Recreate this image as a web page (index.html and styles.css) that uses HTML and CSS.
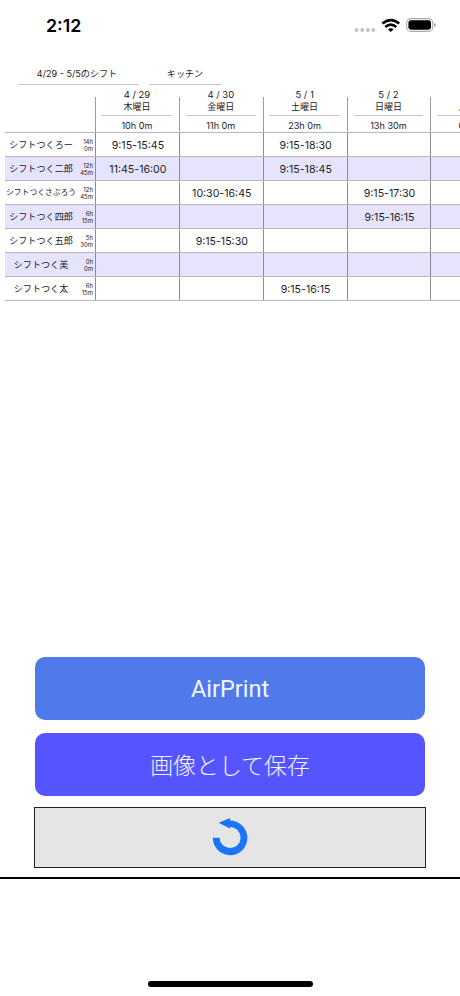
FILE: index.html
```html
<!DOCTYPE html>
<html lang="ja">
<head>
<meta charset="utf-8">
<title>シフト</title>
<link rel="stylesheet" href="styles.css">
</head>
<body>
<header class="status">
  <span class="clock">2:12</span>
  <svg class="indicators" width="84" height="20" viewBox="0 0 84 20">
    <g fill="#c4c4c4"><circle cx="4.5" cy="15" r="2"/><circle cx="10.2" cy="15" r="2"/><circle cx="15.9" cy="15" r="2"/><circle cx="21.3" cy="15" r="2"/></g>
    <g fill="none" stroke="#000" stroke-width="2.6"><path d="M30.4 8.6Q38.8 1.5 47.2 8.6"/><path d="M33.3 12Q38.8 7.2 44.3 12"/></g>
    <path d="M36 14.2Q38.8 12.1 41.6 14.2L38.8 17Z"/>
    <rect x="54.7" y="3.6" width="26" height="12.8" rx="4" fill="#fff" stroke="#aaa" stroke-width="1.1"/>
    <rect x="56.4" y="5.3" width="22.6" height="9.4" rx="2.4"/>
    <path d="M82 8.1Q83.6 8.5 83.6 10T82 11.9Z" fill="#999"/>
  </svg>
</header>
<div class="labels">
  <div class="label period">4/29 - 5/5のシフト</div>
  <div class="label place">キッチン</div>
</div>
<main class="sheet">
  <div class="row head">
    <div class="corner"></div>
    <div class="day"><div class="date">4 / 29</div><div class="week">木曜日</div><div class="total">10h 0m</div></div>
    <div class="day"><div class="date">4 / 30</div><div class="week">金曜日</div><div class="total">11h 0m</div></div>
    <div class="day"><div class="date">5 / 1</div><div class="week">土曜日</div><div class="total">23h 0m</div></div>
    <div class="day"><div class="date">5 / 2</div><div class="week">日曜日</div><div class="total">13h 30m</div></div>
    <div class="day"><div class="date"></div><div class="week">月曜日</div><div class="total">0h 0m</div></div>
  </div>
  <div class="row"><div class="person"><span class="name">シフトつくろー</span><span class="hours">14h<br>0m</span></div><div class="cell">9:15-15:45</div><div class="cell"></div><div class="cell">9:15-18:30</div><div class="cell"></div><div class="cell"></div></div>
  <div class="row"><div class="person"><span class="name">シフトつく二郎</span><span class="hours">12h<br>45m</span></div><div class="cell">11:45-16:00</div><div class="cell"></div><div class="cell">9:15-18:45</div><div class="cell"></div><div class="cell"></div></div>
  <div class="row"><div class="person"><span class="name small">シフトつくさぶろう</span><span class="hours">12h<br>45m</span></div><div class="cell"></div><div class="cell">10:30-16:45</div><div class="cell"></div><div class="cell">9:15-17:30</div><div class="cell"></div></div>
  <div class="row"><div class="person"><span class="name">シフトつく四郎</span><span class="hours">6h<br>15m</span></div><div class="cell"></div><div class="cell"></div><div class="cell"></div><div class="cell">9:15-16:15</div><div class="cell"></div></div>
  <div class="row"><div class="person"><span class="name">シフトつく五郎</span><span class="hours">5h<br>30m</span></div><div class="cell"></div><div class="cell">9:15-15:30</div><div class="cell"></div><div class="cell"></div><div class="cell"></div></div>
  <div class="row"><div class="person"><span class="name">シフトつく美</span><span class="hours">0h<br>0m</span></div><div class="cell"></div><div class="cell"></div><div class="cell"></div><div class="cell"></div><div class="cell"></div></div>
  <div class="row"><div class="person"><span class="name">シフトつく太</span><span class="hours">6h<br>15m</span></div><div class="cell"></div><div class="cell"></div><div class="cell">9:15-16:15</div><div class="cell"></div><div class="cell"></div></div>
</main>
<section class="actions">
  <button class="button print"><span>AirPrint</span></button>
  <button class="button save">画像として保存</button>
  <button class="back" aria-label="戻る">
    <svg width="40" height="40" viewBox="0 0 40 40"><path d="M2.8 19.7A17.3 17.3 0 1 0 20 2.6V0L8.6 4.8L20 10.6V9.1A10.5 10.5 0 1 1 9.6 19.7Z" fill="#1b75f8"/></svg>
  </button>
</section>
<footer class="bottom"><div class="home"></div></footer>
</body>
</html>
```

FILE: styles.css
```css
* { box-sizing: border-box; }
body {
  margin: 0;
  width: 460px;
  height: 996px;
  overflow: hidden;
  display: flex;
  flex-direction: column;
  background: #fff;
  color: #1c1c1e;
  font-family: Inter, "Noto Sans CJK JP", sans-serif;
}
.status {
  height: 62px;
  display: flex;
  justify-content: space-between;
  align-items: flex-start;
  padding: 15px 24px 0 46px;
}
.clock { font-size: 17.8px; line-height: 21px; font-weight: 600; color: #000; }
.indicators { display: block; }
.labels {
  display: flex;
  gap: 11px;
  padding-left: 18px;
  height: 27px;
}
.label {
  height: 23px;
  border-bottom: 1px solid #c4c4c4;
  font-size: 9.1px;
  line-height: 24px;
  text-align: center;
  white-space: nowrap;
}
.period { width: 120px; padding-right: 2px; }
.place { width: 72px; }
.sheet { padding-left: 5px; height: 568px; overflow: hidden; }
.row {
  display: grid;
  grid-template-columns: 90px repeat(5, 83.85px);
  grid-template-rows: 23px;
  width: 510px;
  height: 24px;
  border-bottom: 1px solid #b6b6bc;
}
.row:nth-child(odd):not(.head) { background: #e5e4fc; }
.head { height: 44px; grid-template-rows: 43px; }
.day {
  text-align: center;
  font-size: 9.5px;
  background: linear-gradient(#9b9b9f, #9b9b9f) 0 8px / 1px 36px no-repeat;
}
.date { height: 12px; line-height: 12px; }
.week { height: 15px; line-height: 12px; font-size: 9px; margin: 0 7px; border-bottom: 1px solid #c4c4c4; }
.total { line-height: 19px; font-size: 9.1px; }
.cell {
  border-left: 1px solid #8b8b92;
  font-size: 10.6px;
  line-height: 25px;
  padding-left: 1px;
  text-align: center;
}
.person {
  display: flex;
  align-items: center;
  padding: 0 2px 0 1px;
}
.name {
  flex: 1;
  text-align: center;
  white-space: nowrap;
  font-size: 9.1px;
  line-height: 23px;
}
.small { font-size: 7.8px; }
.hours { width: 17px; text-align: right; font-size: 6px; line-height: 7px; }
.actions {
  padding: 0 34px;
  height: 220px;
  display: flex;
  flex-direction: column;
}
.button {
  width: 390px;
  margin: 0 0 12px 1px;
  border: 0;
  border-radius: 10px;
  color: #f2f5ff;
  font-family: Inter, "Noto Sans CJK JP", sans-serif;
  font-size: 22.9px;
  font-weight: 300;
  padding: 0;
}
.print { height: 63px; margin-bottom: 12.5px; background: #507ae9; font-family: Roboto, sans-serif; font-size: 23.5px; font-weight: 400; }
.save { height: 63.5px; background: #5654ff; margin-bottom: 11px; }
.back {
  width: 392px;
  height: 61px;
  padding: 0;
  border: 1.5px solid #222;
  border-radius: 0;
  background: #e5e5e5;
  display: flex;
  align-items: center;
  justify-content: center;
}
.bottom {
  height: 119px;
  border-top: 2px solid #000;
  display: flex;
  justify-content: center;
  align-items: flex-end;
  padding-bottom: 9px;
}
.home { width: 165px; height: 6px; border-radius: 3px; background: #000; }
```
